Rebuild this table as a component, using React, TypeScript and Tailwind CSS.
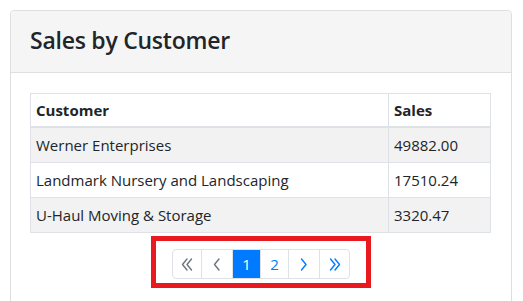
const rows = [
  { customer: "Werner Enterprises", sales: "49882.00" },
  { customer: "Landmark Nursery and Landscaping", sales: "17510.24" },
  { customer: "U-Haul Moving & Storage", sales: "3320.47" },
];

function Chevron({ dir, double }: { dir: "left" | "right"; double?: boolean }) {
  const single = dir === "left" ? "M6 1 L1.5 6.5 L6 12" : "M1.5 1 L6 6.5 L1.5 12";
  return (
    <svg
      width={double ? 12 : 8}
      height={13}
      viewBox={double ? "0 0 12 13" : "0 0 8 13"}
      fill="none"
      stroke="currentColor"
      strokeWidth="1.4"
      strokeLinecap="round"
      strokeLinejoin="round"
    >
      <path d={single} />
      {double && <path d={single} transform="translate(4.5 0)" />}
    </svg>
  );
}

const pages = [
  { key: "first", w: "w-[30px]", tone: "text-[#6c757d]", content: <Chevron dir="left" double /> },
  { key: "prev", w: "w-[32px]", tone: "text-[#6c757d]", content: <Chevron dir="left" /> },
  { key: "1", w: "w-[29px]", tone: "text-white bg-[#007bff] border-[#007bff] z-10", content: "1" },
  { key: "2", w: "w-[29px]", tone: "text-[#007bff]", content: "2" },
  { key: "next", w: "w-[32px]", tone: "text-[#007bff]", content: <Chevron dir="right" /> },
  { key: "last", w: "w-[31px]", tone: "text-[#007bff]", content: <Chevron dir="right" double /> },
];

export default function App() {
  return (
    <div className="w-[523px] h-[301px] overflow-hidden bg-white pt-[10px] pl-[10px] font-['Open_Sans','Noto_Sans',sans-serif] text-[#212529]">
      <div className="w-[502px] h-[320px] border border-[#dfdfdf] rounded-t-[4px]">
        {/* Card header */}
        <div className="h-[62px] bg-[#f5f5f5] border-b border-[#dfdfdf] rounded-t-[4px] px-[19px] flex items-center">
          <h3 className="text-[23px] font-semibold leading-none tracking-[-0.25px] pb-[2px]">Sales by Customer</h3>
        </div>

        {/* Card body */}
        <div className="px-[19px] pt-[20px]">
          <table className="w-[461px] border-collapse text-[15px] leading-6">
            <thead>
              <tr>
                <th className="w-[358px] text-left font-bold border border-[#dee2e6] border-b-2 px-[5px] pt-[4px] pb-[4px]">
                  Customer
                </th>
                <th className="text-left font-bold border border-[#dee2e6] border-b-2 px-[5px] pt-[4px] pb-[4px]">
                  Sales
                </th>
              </tr>
            </thead>
            <tbody>
              {rows.map((r, i) => (
                <tr key={r.customer} className={i % 2 === 0 ? "bg-[#f2f2f2]" : "bg-white"}>
                  <td className="border border-[#dee2e6] px-[5px] py-[5px]">{r.customer}</td>
                  <td className="border border-[#dee2e6] px-[5px] py-[5px]">{r.sales}</td>
                </tr>
              ))}
            </tbody>
          </table>

          {/* Pagination */}
          <div className="flex justify-center mt-[3px]">
            <div className="w-[220px] h-[52px] border-[5px] border-[#e8191f] flex justify-center pt-[8px]">
              <ul className="flex h-[30px]">
                {pages.map((p, i) => (
                  <li
                    key={p.key}
                    className={`${p.w} ${p.tone} relative h-[30px] flex items-center justify-center border border-[#dee2e6] -ml-px first:ml-0 text-[15px] ${
                      i === 0 ? "rounded-l-[4px]" : ""
                    } ${i === pages.length - 1 ? "rounded-r-[4px]" : ""}`}
                  >
                    {p.content}
                  </li>
                ))}
              </ul>
            </div>
          </div>
        </div>
      </div>
    </div>
  );
}
